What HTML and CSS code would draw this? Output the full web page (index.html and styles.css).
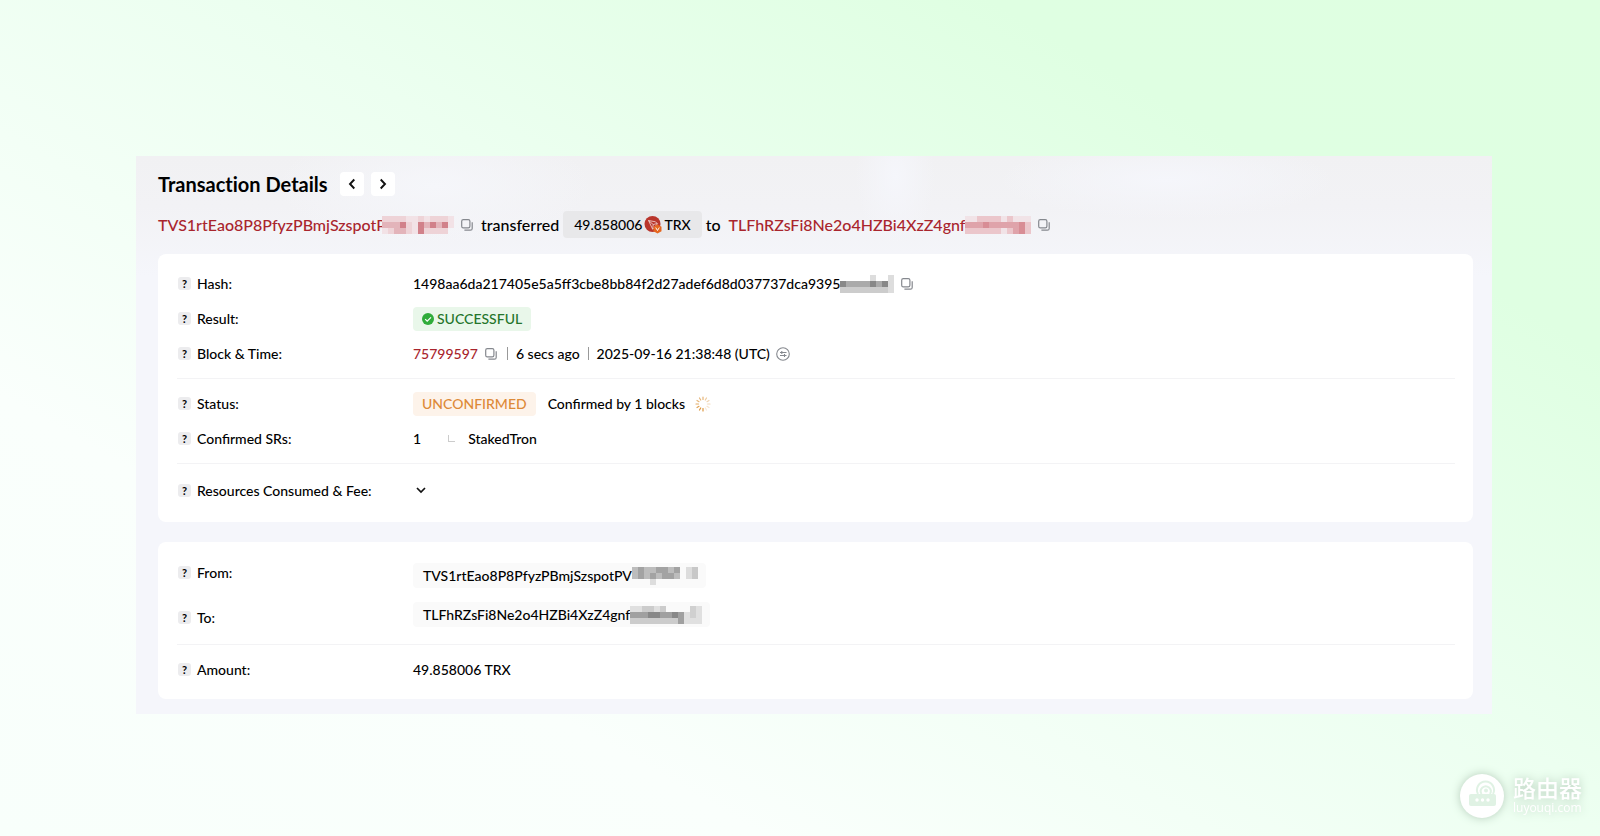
FILE: index.html
```html
<!DOCTYPE html>
<html lang="en">
<head>
<meta charset="utf-8">
<title>Transaction Details</title>
<link rel="stylesheet" href="styles.css">
</head>
<body>
<svg class="defs" aria-hidden="true">
  <symbol id="copy" viewBox="0 0 12 12">
    <rect x="0.7" y="0.7" width="8.2" height="8.2" rx="1.6" fill="none" stroke="currentColor" stroke-width="1.2"/>
    <path d="M11.2 3.2V9.4a1.8 1.8 0 0 1-1.8 1.8H3.4" fill="none" stroke="currentColor" stroke-width="1.2"/>
  </symbol>
</svg>
<main class="panel">
  <header class="head">
    <h1 class="title">Transaction Details</h1>
    <nav class="pager">
      <button class="page-btn" type="button" aria-label="Previous transaction"><svg width="8" height="12" viewBox="0 0 8 12"><path d="M6.3 1.5 2 6l4.3 4.5" fill="none" stroke="#111" stroke-width="1.9"/></svg></button>
      <button class="page-btn" type="button" aria-label="Next transaction"><svg width="8" height="12" viewBox="0 0 8 12"><path d="M1.7 1.5 6 6l-4.3 4.5" fill="none" stroke="#111" stroke-width="1.9"/></svg></button>
    </nav>
  </header>

  <section class="summary">
    <a class="address" href="#from">TVS1rtEao8P8PfyzPBmjSzspotP</a>
    <svg class="mask mask-over" width="72" height="18" viewBox="0 0 12 3" preserveAspectRatio="none" shape-rendering="crispEdges">
      <path fill="#eed3d7" d="M0 0h11v3h-11z"/><path fill="#f2e2e6" d="M4 0h2v1h-2zM7 0h1v1h-1zM11 0h1v2h-1zM0 2h1v1h-1zM5 0h1v3h-1z"/><path fill="#e3b4ba" d="M0 1h3v1h-3zM2 2h2v1h-2zM7 1h1v1h-1zM9 1h1v1h-1z"/><path fill="#d1818a" d="M3 1h1v1h-1zM6 1h1v2h-1zM8 1h1v1h-1zM10 1h1v1h-1z"/>
    </svg>
    <button class="copy" type="button" aria-label="Copy sender"><svg width="12" height="12"><use href="#copy"/></svg></button>
    <span class="word">transferred</span>
    <span class="chip">49.858006
      <svg width="18" height="18" viewBox="0 0 18 18"><circle cx="8.5" cy="8" r="8" fill="#b9352c"/><path d="M4.5 4.5l7 1.3 2 2-4.800 5.500zM4.500 4.500l4.700 4 4-1M9.200 8.500l-.5 4.500" fill="none" stroke="#f3d7d2" stroke-width=".8"/><path d="M13.500 8.500l4 2.300v4.400l-4 2.300-4-2.300v-4.400z" fill="#e5661f"/><path d="M11.700 11.500l1.800 3 1.800-3" fill="none" stroke="#fff" stroke-width=".9"/></svg>TRX</span>
    <span class="word">to</span>
    <a class="address" href="#to">TLFhRZsFi8Ne2o4HZBi4XzZ4gnf</a>
    <svg class="mask" width="66" height="18" viewBox="0 0 11 3" preserveAspectRatio="none" shape-rendering="crispEdges">
      <path fill="#ebc6cb" d="M0 0h11v3h-11z"/><path fill="#dfa3aa" d="M0 1h10v1h-10zM8 2h2v1h-2z"/><path fill="#f1e3e7" d="M0 0h2v1h-2zM6 0h1v1h-1zM8 0h3v1h-3zM6 2h1v1h-1z"/><path fill="#d88d95" d="M3 1h1v1h-1zM9 1h1v2h-1z"/>
    </svg>
    <button class="copy" type="button" aria-label="Copy recipient"><svg width="12" height="12"><use href="#copy"/></svg></button>
  </section>

  <section class="card">
    <div class="group">
      <div class="row">
        <div class="label"><span class="help">?</span>Hash:</div>
        <div class="value"><span>1498aa6da217405e5a5ff3cbe8bb84f2d27adef6d8d037737dca9395</span><svg class="mask" width="54" height="18" viewBox="0 0 9 3" preserveAspectRatio="none" shape-rendering="crispEdges"><path fill="#ccc" d="M0 1h9v2h-9z"/><path fill="#aaa" d="M1 1h7v1h-7z"/><path fill="#888" d="M0 1h1v1h-1zM5 1h1v1h-1zM7 1h1v1h-1z"/><path fill="#ddd" d="M5 0h1v1h-1zM8 0h1v3h-1z"/></svg>
          <button class="copy" type="button" aria-label="Copy hash"><svg width="12" height="12"><use href="#copy"/></svg></button></div>
      </div>
      <div class="row">
        <div class="label"><span class="help">?</span>Result:</div>
        <div class="value"><span class="tag tag-ok"><svg width="12" height="12" viewBox="0 0 12 12"><circle cx="6" cy="6" r="6" fill="#2fac3a"/><path d="M3.2 6.2l2 2L9 4.3" fill="none" stroke="#fff" stroke-width="1.2"/></svg>SUCCESSFUL</span></div>
      </div>
      <div class="row">
        <div class="label"><span class="help">?</span>Block &amp; Time:</div>
        <div class="value"><a class="block" href="#block">75799597</a>
          <button class="copy" type="button" aria-label="Copy block"><svg width="12" height="12"><use href="#copy"/></svg></button>
          <span class="bar"></span><span>6 secs ago</span><span class="bar"></span><span>2025-09-16 21:38:48 (UTC)</span>
          <button class="swap" type="button" aria-label="Switch time zone"><svg width="14" height="14" viewBox="0 0 14 14" fill="none" stroke="currentColor" stroke-width="1.1"><circle cx="7" cy="7" r="6.3"/><path d="M4 5.500h6.500M4 8.500h6.500M5.800 4v3M8.500 7v3"/></svg></button></div>
      </div>
    </div>
    <div class="group">
      <div class="row">
        <div class="label"><span class="help">?</span>Status:</div>
        <div class="value"><span class="tag tag-wait">UNCONFIRMED</span><span class="note">Confirmed by 1 blocks</span>
          <svg class="spinner" width="16" height="16" viewBox="0 0 16 16" stroke="#dc963f" stroke-width="1.2" stroke-linecap="round"><path d="M8 1v2.500" opacity=".7"/><path d="M11.500 2l-1.200 2" opacity=".5"/><path d="M14 4.500l-2 1.200" opacity=".4"/><path d="M15 8h-2.500" opacity=".35"/><path d="M14 11.500l-2-1.200" opacity=".25"/><path d="M11.500 14l-1.200-2" opacity=".2"/><path d="M8 15v-2.500"/><path d="M4.500 14l1.200-2"/><path d="M2 11.500l2-1.200" opacity=".9"/><path d="M1 8h2.500" opacity=".8"/><path d="M2 4.500l2 1.200" opacity=".7"/><path d="M4.500 2l1.200 2" opacity=".7"/></svg></div>
      </div>
      <div class="row">
        <div class="label"><span class="help">?</span>Confirmed SRs:</div>
        <div class="value"><span>1</span><span class="elbow"></span><span>StakedTron</span></div>
      </div>
    </div>
    <div class="group group-last">
      <div class="row">
        <div class="label"><span class="help">?</span>Resources Consumed &amp; Fee:</div>
        <div class="value"><button class="expand" type="button" aria-label="Expand"><svg width="10" height="7" viewBox="0 0 10 7"><path d="M1 1l4 4 4-4" fill="none" stroke="#111" stroke-width="1.7"/></svg></button></div>
      </div>
    </div>
  </section>

  <section class="card card-short">
    <div class="group parties">
      <div class="party-labels">
        <div class="label"><span class="help">?</span>From:</div>
        <div class="label"><span class="help">?</span>To:</div>
      </div>
      <div class="party-values">
        <div class="party" id="from">TVS1rtEao8P8PfyzPBmjSzspotPV<svg class="mask" width="66" height="18" viewBox="0 0 11 3" preserveAspectRatio="none" shape-rendering="crispEdges"><path fill="#bdbdbd" d="M0 0h8v2h-8z"/><path fill="#a3a3a3" d="M1 0h1v2h-1zM4 0h2v1h-2zM3 1h1v1h-1zM5 1h2v1h-2zM7 0h1v1h-1z"/><path fill="#ddd" d="M3 2h1v1h-1zM9 0h2v2h-2z"/><path fill="#c8c8c8" d="M10 0h1v2h-1z"/></svg></div>
        <div class="party" id="to">TLFhRZsFi8Ne2o4HZBi4XzZ4gnf<svg class="mask" width="72" height="18" viewBox="0 0 12 3" preserveAspectRatio="none" shape-rendering="crispEdges"><path fill="#ccc" d="M0 0h6v3h-6zM6 1h3v2h-3z"/><path fill="#a0a0a0" d="M0 1h9v1h-9zM8 1h1v2h-1z"/><path fill="#888" d="M3 1h2v1h-2zM7 1h1v1h-1z"/><path fill="#e0e0e0" d="M0 0h2v1h-2zM4 0h1v1h-1zM9 1h3v2h-3zM10 0h2v1h-2z"/><path fill="#d0d0d0" d="M10 0h1v2h-1z"/></svg></div>
      </div>
    </div>
    <div class="group">
      <div class="row">
        <div class="label"><span class="help">?</span>Amount:</div>
        <div class="value">49.858006 TRX</div>
      </div>
    </div>
  </section>
</main>

<footer class="brand">
  <svg width="44" height="44" viewBox="0 0 44 44"><circle cx="22" cy="22" r="22" fill="#fff"/><g fill="#e0f2e4"><rect x="9" y="20" width="27" height="12" rx="2"/><circle cx="26" cy="16.500" r="2"/></g><path d="M18 20a8.500 8.500 0 1 1 15 0M21.500 20a5 5 0 1 1 8.500 0" fill="none" stroke="#e0f2e4" stroke-width="2"/><g fill="#fff"><circle cx="17" cy="26" r="1.700"/><circle cx="22.500" cy="26" r="1.700"/><circle cx="28" cy="26" r="1.700"/></g></svg>
  <div class="brand-text"><span class="brand-name" lang="zh">路由器</span><span class="brand-url">luyouqi.com</span></div>
</footer>
</body>
</html>
```
FILE: styles.css
```css
* { box-sizing: border-box; }

body {
  margin: 0;
  min-height: 100vh;
  display: flex;
  flex-direction: column;
  padding: 156px 108px 0 136px;
  background: linear-gradient(30deg, #f8fffb 0%, #fafffc 25%, #ecfff0 55%, #dfffe2 80%, #dfffe1 100%);
  color: #000;
  font-family: Lato, "Liberation Sans", sans-serif;
  font-size: 14px;
  font-weight: 500;
  line-height: 20px;
}

button {
  display: inline-flex;
  align-items: center;
  justify-content: center;
  padding: 0;
  border: 0;
  background: none;
  color: #85888e;
  cursor: pointer;
}

a { text-decoration: none; }
svg { flex: none; }
.defs { display: none; }

.panel {
  padding: 16px 19px 15px 22px;
  background:
    radial-gradient(ellipse 160px 60px at 22% 30px, #f5f6fa, transparent),
    radial-gradient(ellipse 40px 70px at 56% 20px, #f5f6fb, transparent),
    radial-gradient(ellipse 170px 40px at 76% 24px, #f5f6fb, transparent),
    linear-gradient(to bottom, #f1f1f3 0, #f2f2f5 50px, #f5f6fb 120px, #f5f6fb 100%);
}

.head { display: flex; align-items: center; gap: 12px; height: 24px; }
.title {
  margin: 0;
  font-size: 20px;
  line-height: 22px;
  font-weight: 700;
  font-variant-ligatures: none;
}
.pager { display: flex; gap: 7px; }
.page-btn { width: 24px; height: 24px; border-radius: 4px; background: #fff; }

.summary {
  display: flex;
  align-items: center;
  height: 27px;
  margin: 15px 0 16px;
  font-size: 16px;
}
.address, .block { color: #a9252d; }
.word { margin: 0 4px 0 8px; }
.word + .address { margin-left: 4px; }
.chip {
  display: flex;
  align-items: center;
  gap: 2px;
  height: 27px;
  padding: 0 11px;
  border-radius: 4px;
  background: #e8e8ea;
  font-size: 14px;
}
.chip + .word { margin-left: 4px; }
.mask-over { margin-left: -4px; }
.copy { margin-left: 7px; }

.card {
  padding: 4px 18px 9px 19px;
  border-radius: 8px;
  background: #fff;
}
.card-short { margin-top: 20px; padding-top: 0; padding-bottom: 5px; }
.group { padding: 8px 0 7px; }
.group + .group { padding-top: 7px; border-top: 1px solid #f3f3f5; }
.group + .group-last { padding-top: 9px; padding-bottom: 5px; }
.row { display: flex; align-items: center; min-height: 35px; }
.label { display: flex; align-items: center; gap: 6px; width: 236px; padding-left: 1px; flex: none; }
.value { display: flex; align-items: center; }
.help {
  width: 13px;
  height: 13px;
  border-radius: 3px;
  background: #ececee;
  font-size: 11px;
  line-height: 13px;
  font-weight: 700;
  text-align: center;
}

.tag {
  display: flex;
  align-items: center;
  gap: 3px;
  height: 24px;
  padding: 0 9px;
  border-radius: 4px;
}
.tag-ok { background: #e9f7ea; color: #25752c; }
.tag-wait { background: #fdf3ea; color: #dd8a38; }
.note { margin-left: 12px; }
.spinner { margin-left: 10px; }
.bar { width: 1px; height: 13px; margin: 0 8px; background: #999; }
.copy + .bar { margin-left: 10px; }
.swap { margin-left: 6px; }
.elbow {
  width: 7px;
  height: 7px;
  margin: 0 13px 0 27px;
  border: 1px solid #ccc;
  border-width: 0 0 1px 1px;
}
.expand { width: 16px; height: 16px; }

.parties { display: flex; align-items: center; padding: 8px 0 4px; }
.party-labels .label { height: 45px; }
.party-values { display: flex; flex-direction: column; align-items: flex-start; gap: 14px; }
.party {
  display: flex;
  align-items: center;
  height: 25px;
  padding: 0 8px 0 10px;
  border-radius: 4px;
  background: #fafafa;
}

.brand {
  display: flex;
  align-items: center;
  gap: 9px;
  align-self: flex-end;
  margin: auto -90px 18px 0;
  color: #fff;
  filter: drop-shadow(0 0 5px #b5ccba);
}
.brand-text { display: flex; flex-direction: column; }
.brand-name { font-family: Lato, "Noto Sans CJK SC", sans-serif; font-size: 23px; line-height: 24px; }
.brand-url { font-family: "Open Sans", sans-serif; font-size: 12px; line-height: 16px; }
```
